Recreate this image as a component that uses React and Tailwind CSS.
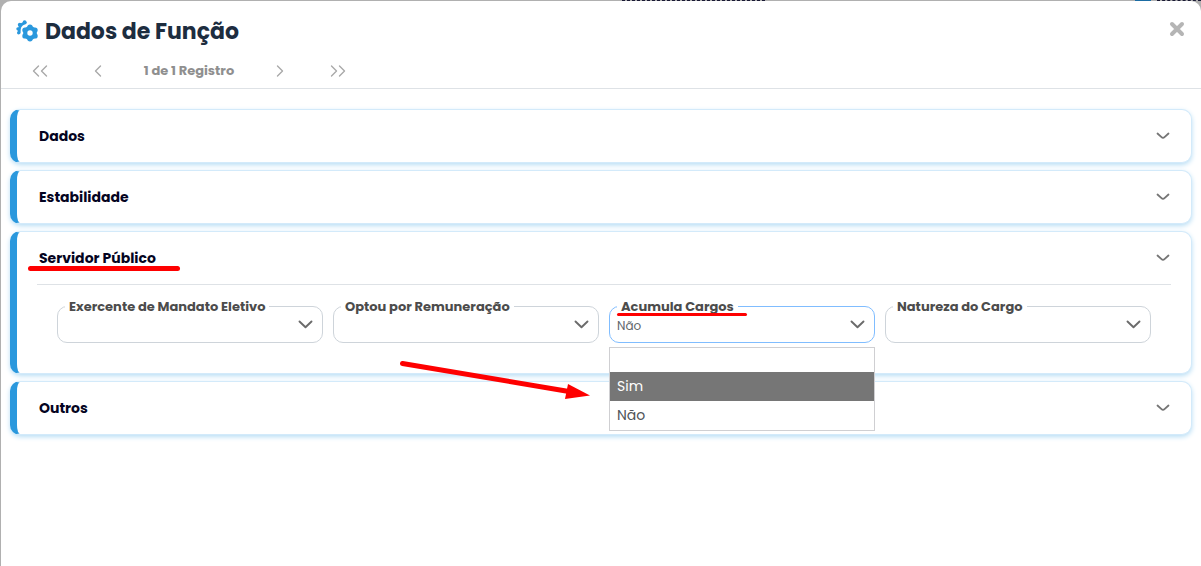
import React, { useState } from 'react';

const fields = [
  { id: 'mandato', label: 'Exercente de Mandato Eletivo' },
  { id: 'remuneracao', label: 'Optou por Remuneração' },
  { id: 'acumula', label: 'Acumula Cargos', open: true },
  { id: 'natureza', label: 'Natureza do Cargo' },
];

const teeth = [
  [14, 7.2],
  [19, 10.1],
  [19, 15.9],
  [14, 18.8],
  [9, 15.9],
  [9, 10.1],
];

function GearsIcon() {
  return (
    <svg width="22" height="22" viewBox="0 0 22 22" fill="none" aria-hidden="true">
      <path d="M3.2 12.6 Q2.2 4.6 9.2 2.8" stroke="#2a98dd" strokeWidth="2.8" strokeLinecap="round" />
      <g fill="#2a98dd">
        <circle cx="8.6" cy="2.2" r="1.9" />
        <circle cx="3.8" cy="4.8" r="2" />
        <circle cx="1.9" cy="8.8" r="1.6" />
        <circle cx="2.6" cy="12.8" r="1.6" />
      </g>
      <circle cx="14" cy="13" r="7.6" fill="#ffffff" />
      <g fill="#2a98dd">
        <circle cx="14" cy="13" r="6.9" />
        {teeth.map(([x, y]) => (
          <circle key={`${x}-${y}`} cx={x} cy={y} r="2.7" />
        ))}
      </g>
      <circle cx="14" cy="13" r="2.7" fill="#ffffff" />
    </svg>
  );
}

function Chevron({ points, width = 14 }) {
  return (
    <svg width={width} height="14" viewBox={`0 0 ${width} 14`} fill="none" aria-hidden="true">
      {points.map((p) => (
        <polyline key={p} points={p} stroke="#a9a9a9" strokeWidth="1.4" strokeLinecap="round" strokeLinejoin="round" />
      ))}
    </svg>
  );
}

function PagerButton({ label, points, width }) {
  return (
    <button type="button" aria-label={label} className="flex w-[58px] justify-center">
      <Chevron points={points} width={width} />
    </button>
  );
}

function Card({ title, marked, children }) {
  return (
    <section className="rounded-[10px] border border-l-[7px] border-[#d3eafa] border-l-[#2a98dd] bg-white shadow-[0_2px_5px_#b9def5]">
      <h2>
        <button type="button" className="flex h-[52px] w-full items-center justify-between pr-[21px] pl-[22px] text-left">
          <span className="relative text-sm font-bold text-[#040421]">
            {title}
            {marked && <span className="absolute top-[18px] -left-[11px] h-[5px] w-[152px] rounded-full bg-[#fe0000]" />}
          </span>
          <svg width="14" height="8" viewBox="0 0 14 8" fill="none" aria-hidden="true">
            <path d="M1.5 1.5 L5.5 5.2 Q7 6.6 8.5 5.2 L12.5 1.5" stroke="#757575" strokeWidth="1.8" strokeLinecap="round" />
          </svg>
        </button>
      </h2>
      {children}
    </section>
  );
}

function OptionsMenu({ onPick }) {
  return (
    <div className="absolute top-[41px] left-0 z-10 w-full">
      <ul role="listbox" aria-label="Acumula Cargos" className="border border-[#cfcfd2] bg-white text-sm text-[#505458]">
        <li role="option" aria-selected="false" className="h-6" onClick={() => onPick('')} />
        <li role="option" aria-selected="true" className="flex h-[29px] items-center bg-[#767676] px-[7px] pb-0.5 text-white" onClick={() => onPick('Sim')}>
          Sim
        </li>
        <li role="option" aria-selected="false" className="flex h-[29px] items-center px-[7px] pb-0.5" onClick={() => onPick('Não')}>
          Não
        </li>
      </ul>
      {/* arrow pointing at the highlighted option */}
      <svg className="absolute top-[10px] right-full mr-[18px]" width="192" height="46" viewBox="0 0 192 46" aria-hidden="true">
        <path d="M3.5 6.5 L170 34.5" stroke="#fe0000" strokeWidth="5" strokeLinecap="round" />
        <path d="M169 27 L191 38.5 L166 42 Z" fill="#fe0000" />
      </svg>
    </div>
  );
}

function SelectField({ field }) {
  const [value, setValue] = useState(field.open ? 'Não' : '');

  return (
    <div className="relative">
      <select
        id={field.id}
        value={value}
        onChange={(e) => setValue(e.target.value)}
        className={`block h-[37px] w-full appearance-none rounded-[10px] border bg-white pt-[3px] pl-[7px] text-xs text-[#60666b] outline-none ${field.open ? 'border-[#80bdff]' : 'border-[#ced4da]'}`}
      >
        <option value=""></option>
        <option value="Sim">Sim</option>
        <option value="Não">Não</option>
      </select>
      <label htmlFor={field.id} className="absolute -top-[7px] left-2 bg-white px-1 text-[13px] leading-4 font-bold whitespace-nowrap text-[#4c4c4c]">
        {field.label}
      </label>
      {field.open && <span className="absolute top-[7px] left-2 h-[3px] w-[130px] rounded-full bg-[#fe0000]" />}
      <svg className="pointer-events-none absolute top-[14px] right-[10px]" width="15" height="9" viewBox="0 0 15 9" fill="none" aria-hidden="true">
        <path d="M1.5 1.5 L7.5 7.3 L13.5 1.5" stroke="#6b6b6b" strokeWidth="1.9" strokeLinecap="round" strokeLinejoin="round" />
      </svg>
      {field.open && <OptionsMenu onPick={setValue} />}
    </div>
  );
}

function App() {
  return (
    <div className="min-h-screen bg-[#b0b0b0] pl-px font-[Poppins,Inter,sans-serif]">
      {/* sliver of the page behind the dialog */}
      <div className="flex h-px justify-end gap-1.5" aria-hidden="true">
        <span className="mr-[364px] w-[143px] border-t border-dashed border-[#1a1a35]" />
        <span className="w-4 bg-[#1b6ca3]" />
        <span className="w-11 border-t border-dashed border-[#1a1a35]" />
      </div>
      <div role="dialog" aria-labelledby="titulo" className="min-h-[calc(100vh-1px)] rounded-t-[10px] bg-white">
        <header className="border-b border-[#dee2e6]">
          <div className="flex h-[60px] items-center justify-between pr-4 pl-[15px]">
            <div className="flex items-center gap-[7px]">
              <GearsIcon />
              <h1 id="titulo" className="text-[22px] font-bold text-[#1d2d3f]">Dados de Função</h1>
            </div>
            <button type="button" aria-label="Fechar" className="mb-1">
              <svg width="16" height="16" viewBox="0 0 16 16" aria-hidden="true">
                <path d="M3 3 L13 13 M13 3 L3 13" stroke="#b5b5b5" strokeWidth="4" strokeLinecap="round" />
              </svg>
            </button>
          </div>
          <nav aria-label="Registros" className="flex h-[27px] items-center pb-2 pl-[10px]">
            <PagerButton label="Primeiro" width={16} points={['6.5,2 1.5,7 6.5,12', '14.5,2 9.5,7 14.5,12']} />
            <PagerButton label="Anterior" points={['9.5,2 4.5,7 9.5,12']} />
            <span className="w-[124px] text-center text-[13px] leading-4 font-bold text-[#8f8f8f]">1 de 1 Registro</span>
            <PagerButton label="Próximo" points={['4.5,2 9.5,7 4.5,12']} />
            <PagerButton label="Último" width={16} points={['1.5,2 6.5,7 1.5,12', '9.5,2 14.5,7 9.5,12']} />
          </nav>
        </header>

        <main className="flex flex-col gap-[7px] px-[9px] pt-5 pb-8">
          <Card title="Dados" />
          <Card title="Estabilidade" />
          <Card title="Servidor Público" marked>
            <div className="mr-5 ml-5 border-t border-[#dee2e6] px-5 pt-[21px] pb-[30px]">
              <div className="grid grid-cols-4 gap-[10px]">
                {fields.map((field) => (
                  <SelectField key={field.id} field={field} />
                ))}
              </div>
            </div>
          </Card>
          <Card title="Outros" />
        </main>
      </div>
    </div>
  );
}

export default App;
